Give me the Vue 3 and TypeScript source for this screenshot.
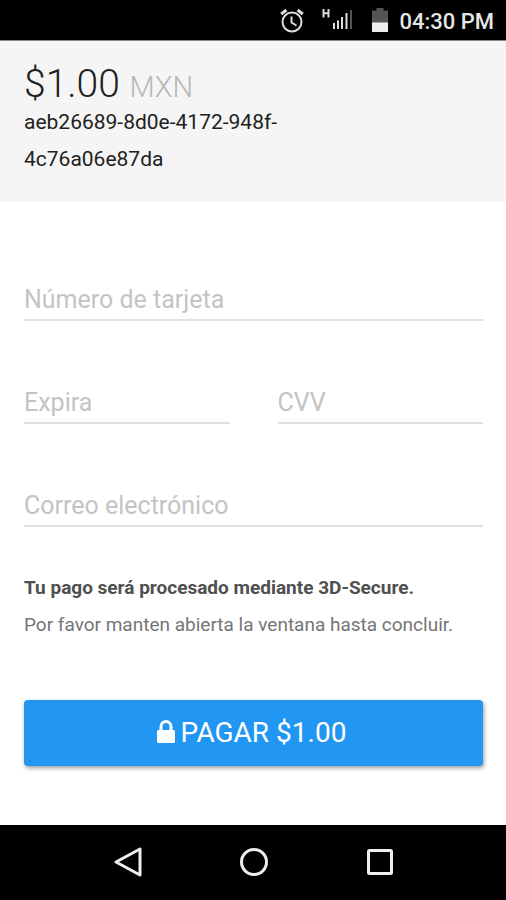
<script setup lang="ts">
import { ref } from 'vue'

const amount = '$1.00'
const card = ref('')
const expiry = ref('')
const cvv = ref('')
const email = ref('')
</script>

<template>
  <div class="screen">
    <header class="status">
      <svg class="alarm" viewBox="0 0 24 26" aria-hidden="true">
        <circle cx="12" cy="15" r="9.500" />
        <path d="M11.500 9.500v6l5 3" />
        <path class="bells" d="M1.200 7 6.500 3M22.800 7 17.500 3" />
      </svg>
      <svg class="signal" viewBox="0 0 30 22" aria-hidden="true">
        <path class="network" d="M1.500 0v8.500M6.500 0v8.500M1.500 4.200h5" />
        <path class="bars" d="M12 20v-6M16 20v-8.500M20 20v-12M24.500 20v-16" />
        <path class="off" d="M29 20V1" />
      </svg>
      <svg class="battery" viewBox="0 0 16 24" aria-hidden="true">
        <path class="empty" d="M4.500 0h7v2.500H16V15H0V2.500h4.500z" />
        <path class="charge" d="M0 14.500h16V24H0z" />
      </svg>
      <time>04:30 PM</time>
    </header>

    <section class="summary">
      <h1>{{ amount }} <small>MXN</small></h1>
      <p>aeb26689-8d0e-4172-948f-<wbr />4c76a06e87da</p>
    </section>

    <main>
      <form @submit.prevent>
        <input v-model="card" class="wide" inputmode="numeric" placeholder="Número de tarjeta" aria-label="Número de tarjeta" />
        <input v-model="expiry" placeholder="Expira" aria-label="Expira" />
        <input v-model="cvv" inputmode="numeric" placeholder="CVV" aria-label="CVV" />
        <input v-model="email" class="wide" type="email" placeholder="Correo electrónico" aria-label="Correo electrónico" />
        <div class="notice wide">
          <strong>Tu pago será procesado mediante 3D-Secure.</strong>
          <p>Por favor manten abierta la ventana hasta concluir.</p>
        </div>
        <button class="pay wide" type="submit">
          <svg viewBox="0 0 18 25" aria-hidden="true">
            <path class="body" d="M1.500 10h15Q18 10 18 11.500v10Q18 23 16.500 23h-15Q0 23 0 21.500v-10Q0 10 1.500 10z" />
            <path class="shackle" d="M4 11V6.500a5 5 0 0 1 10 0V11" />
          </svg>
          <span>PAGAR {{ amount }}</span>
        </button>
      </form>
    </main>

    <nav>
      <button type="button" aria-label="Atrás">
        <svg viewBox="0 0 30 30"><path d="M27 2v26L3 15z" /></svg>
      </button>
      <button type="button" aria-label="Inicio">
        <svg viewBox="0 0 30 30"><circle cx="15" cy="15" r="12.500" /></svg>
      </button>
      <button type="button" aria-label="Recientes">
        <svg viewBox="0 0 30 30"><rect x="3.500" y="3.500" width="23" height="23" rx="1" /></svg>
      </button>
    </nav>
  </div>
</template>

<style>
body {
  margin: 0;
  background: #fff;
}
</style>

<style scoped>
.screen {
  display: flex;
  flex-direction: column;
  min-height: 100vh;
  font-family: Roboto, "Liberation Sans", sans-serif;
  color: #212121;
}

.status {
  display: flex;
  align-items: center;
  justify-content: flex-end;
  height: 41px;
  padding-right: 12px;
  background: #000;
  color: #e6e6e6;
  border-bottom: 1px solid #888;
  box-sizing: border-box;
}

.status svg {
  fill: none;
  stroke: #ddd;
  stroke-width: 2;
}

.alarm {
  width: 24px;
  height: 26px;
  margin-right: 18px;
}

.status .bells {
  stroke-width: 3;
}

.signal {
  width: 30px;
  height: 22px;
  margin-right: 20px;
}

.signal .off {
  stroke: #555;
}

.battery {
  width: 16px;
  height: 24px;
  margin-right: 11px;
}

.status .battery {
  stroke: none;
}

.empty {
  fill: #555;
}

.charge {
  fill: #eee;
}

time {
  padding-top: 2px;
  font-size: 22px;
  font-weight: 500;
}

.summary {
  padding: 23px 24px 24px;
  background: #f5f5f5;
}

h1 {
  margin: 0;
  font-size: 39px;
  font-weight: 300;
  line-height: 40px;
}

small {
  font-size: 29px;
  line-height: 1;
  color: #b8b8b8;
}

.summary p {
  margin: 0;
  max-width: 300px;
  font-size: 21px;
  line-height: 37px;
}

main {
  flex: 1;
  padding: 76px 23px 59px 24px;
}

form {
  display: grid;
  grid-template-columns: 1fr 1fr;
  column-gap: 48px;
  row-gap: 60px;
}

.wide {
  grid-column: 1 / -1;
}

input {
  width: 100%;
  height: 43px;
  padding: 2px 0 0;
  border: 0;
  border-bottom: 2px solid #e0e0e0;
  border-radius: 0;
  box-sizing: border-box;
  background: transparent;
  font-family: inherit;
  font-size: 25px;
  outline: none;
}

input::placeholder {
  color: #c4c4c4;
  opacity: 1;
}

.notice {
  margin: -18px 0 -3px;
  font-size: 19px;
  line-height: 37px;
  color: #757575;
}

.notice strong {
  font-weight: 700;
  color: #4f4f4f;
}

.notice p {
  margin: 0;
}

.pay {
  display: flex;
  align-items: center;
  justify-content: center;
  gap: 6px;
  height: 66px;
  padding: 0 4px 2px 0;
  border: 0;
  border-radius: 4px;
  background: #2196f3;
  box-shadow: 1px 2px 4px rgba(0, 0, 0, 0.4);
  color: #fff;
  font-family: inherit;
  font-size: 28px;
}

.pay svg {
  width: 18px;
  height: 25px;
}

.body {
  fill: #fff;
}

.shackle {
  fill: none;
  stroke: #fff;
  stroke-width: 3;
}

nav {
  display: flex;
  justify-content: center;
  gap: 96px;
  padding: 22px 0 23px 2px;
  background: #000;
}

nav button {
  padding: 0;
  border: 0;
  background: none;
}

nav svg {
  display: block;
  width: 30px;
  height: 30px;
  fill: none;
  stroke: #eee;
  stroke-width: 3;
  stroke-linejoin: round;
}
</style>
